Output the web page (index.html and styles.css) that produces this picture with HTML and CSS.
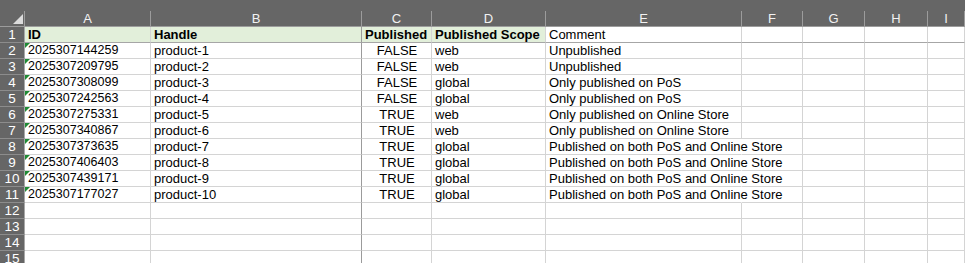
FILE: index.html
```html
<!DOCTYPE html>
<html>
<head>
  <title>products.csv</title>
  <link rel="stylesheet" href="styles.css">
</head>
<body>
  <div class="sheet">
    <div class="row colhead">
      <div class="corner"><svg width="10" height="10" viewBox="0 0 10 10"><polygon points="10,0 10,10 0,10" fill="#dcdcdc"/></svg></div>
      <div>A</div><div class="frz">B</div><div>C</div><div>D</div><div>E</div><div>F</div><div>G</div><div>H</div><div>I</div>
    </div>

    <div class="row first">
      <div class="rh">1</div>
      <div class="cell hd">ID</div>
      <div class="cell hd frz">Handle</div>
      <div class="cell hd">Published</div>
      <div class="cell hd">Published Scope</div>
      <div class="cell">Comment</div>
      <div class="cell"></div><div class="cell"></div><div class="cell"></div><div class="cell"></div>
    </div>

    <div class="row">
      <div class="rh">2</div>
      <div class="cell tx">2025307144259</div>
      <div class="cell frz">product-1</div>
      <div class="cell mid">FALSE</div>
      <div class="cell">web</div>
      <div class="cell">Unpublished</div>
      <div class="cell"></div><div class="cell"></div><div class="cell"></div><div class="cell"></div>
    </div>
    <div class="row">
      <div class="rh">3</div>
      <div class="cell tx">2025307209795</div>
      <div class="cell frz">product-2</div>
      <div class="cell mid">FALSE</div>
      <div class="cell">web</div>
      <div class="cell">Unpublished</div>
      <div class="cell"></div><div class="cell"></div><div class="cell"></div><div class="cell"></div>
    </div>
    <div class="row">
      <div class="rh">4</div>
      <div class="cell tx">2025307308099</div>
      <div class="cell frz">product-3</div>
      <div class="cell mid">FALSE</div>
      <div class="cell">global</div>
      <div class="cell">Only published on PoS</div>
      <div class="cell"></div><div class="cell"></div><div class="cell"></div><div class="cell"></div>
    </div>
    <div class="row">
      <div class="rh">5</div>
      <div class="cell tx">2025307242563</div>
      <div class="cell frz">product-4</div>
      <div class="cell mid">FALSE</div>
      <div class="cell">global</div>
      <div class="cell">Only published on PoS</div>
      <div class="cell"></div><div class="cell"></div><div class="cell"></div><div class="cell"></div>
    </div>
    <div class="row">
      <div class="rh">6</div>
      <div class="cell tx">2025307275331</div>
      <div class="cell frz">product-5</div>
      <div class="cell mid">TRUE</div>
      <div class="cell">web</div>
      <div class="cell">Only published on Online Store</div>
      <div class="cell"></div><div class="cell"></div><div class="cell"></div><div class="cell"></div>
    </div>
    <div class="row">
      <div class="rh">7</div>
      <div class="cell tx">2025307340867</div>
      <div class="cell frz">product-6</div>
      <div class="cell mid">TRUE</div>
      <div class="cell">web</div>
      <div class="cell">Only published on Online Store</div>
      <div class="cell"></div><div class="cell"></div><div class="cell"></div><div class="cell"></div>
    </div>
    <div class="row">
      <div class="rh">8</div>
      <div class="cell tx">2025307373635</div>
      <div class="cell frz">product-7</div>
      <div class="cell mid">TRUE</div>
      <div class="cell">global</div>
      <div class="cell spill">Published on both PoS and Online Store</div>
      <div class="cell"></div><div class="cell"></div><div class="cell"></div><div class="cell"></div>
    </div>
    <div class="row">
      <div class="rh">9</div>
      <div class="cell tx">2025307406403</div>
      <div class="cell frz">product-8</div>
      <div class="cell mid">TRUE</div>
      <div class="cell">global</div>
      <div class="cell spill">Published on both PoS and Online Store</div>
      <div class="cell"></div><div class="cell"></div><div class="cell"></div><div class="cell"></div>
    </div>
    <div class="row">
      <div class="rh">10</div>
      <div class="cell tx">2025307439171</div>
      <div class="cell frz">product-9</div>
      <div class="cell mid">TRUE</div>
      <div class="cell">global</div>
      <div class="cell spill">Published on both PoS and Online Store</div>
      <div class="cell"></div><div class="cell"></div><div class="cell"></div><div class="cell"></div>
    </div>
    <div class="row">
      <div class="rh">11</div>
      <div class="cell tx">2025307177027</div>
      <div class="cell frz">product-10</div>
      <div class="cell mid">TRUE</div>
      <div class="cell">global</div>
      <div class="cell spill">Published on both PoS and Online Store</div>
      <div class="cell"></div><div class="cell"></div><div class="cell"></div><div class="cell"></div>
    </div>

    <div class="row">
      <div class="rh">12</div>
      <div class="cell"></div><div class="cell frz"></div><div class="cell"></div><div class="cell"></div><div class="cell"></div>
      <div class="cell"></div><div class="cell"></div><div class="cell"></div><div class="cell"></div>
    </div>
    <div class="row">
      <div class="rh">13</div>
      <div class="cell"></div><div class="cell frz"></div><div class="cell"></div><div class="cell"></div><div class="cell"></div>
      <div class="cell"></div><div class="cell"></div><div class="cell"></div><div class="cell"></div>
    </div>
    <div class="row">
      <div class="rh">14</div>
      <div class="cell"></div><div class="cell frz"></div><div class="cell"></div><div class="cell"></div><div class="cell"></div>
      <div class="cell"></div><div class="cell"></div><div class="cell"></div><div class="cell"></div>
    </div>
    <div class="row">
      <div class="rh">15</div>
      <div class="cell"></div><div class="cell frz"></div><div class="cell"></div><div class="cell"></div><div class="cell"></div>
      <div class="cell"></div><div class="cell"></div><div class="cell"></div><div class="cell"></div>
    </div>
  </div>
</body>
</html>
```

FILE: styles.css
```css
body {
  margin: 0;
  background: #fff;
  font-family: "Liberation Sans", Arial, sans-serif;
  font-size: 13px;
  color: #000;
  overflow: hidden;
}

.sheet {
  width: 965px;
}

.row {
  display: grid;
  grid-template-columns: 25px 126px 211px 70px 114px 196px 61px 62px 63px 37px;
  height: 16px;
}

/* column letters */
.colhead {
  height: 27px;
  padding-top: 11px;
  box-sizing: border-box;
  background: #666;
}

.colhead div {
  box-sizing: border-box;
  border-right: 1px solid #9c9c9c;
  border-bottom: 1px solid #9c9c9c;
  color: #f2f2f2;
  font-size: 13px;
  line-height: 15px;
  text-align: center;
}

.colhead .corner {
  display: flex;
  justify-content: flex-end;
  align-items: flex-end;
  padding: 0 1px 2px 0;
}

/* row numbers */
.rh {
  box-sizing: border-box;
  background: #666;
  color: #fff;
  border-right: 1px solid #a8a8a8;
  border-bottom: 1px solid #8c8c8c;
  font-size: 13.5px;
  line-height: 15px;
  text-align: center;
}

.cell {
  position: relative;
  box-sizing: border-box;
  border-right: 1px solid #d4d4d4;
  border-bottom: 1px solid #d4d4d4;
  padding: 1px 2px 0 3px;
  line-height: 13px;
  white-space: nowrap;
}

.cell.tx {
  font-size: 12.5px;
}

.cell.mid {
  text-align: center;
}

.cell.spill {
  border-right-color: transparent;
}

.cell.frz {
  border-right-color: #9b9b9b;
}

.first .cell {
  border-bottom-color: #a6a6a6;
}

.cell.hd {
  background: #e2efda;
  font-weight: bold;
}

/* number stored as text marker */
.cell.tx::before {
  content: "";
  position: absolute;
  left: 0;
  top: 0;
  border-top: 5px solid #1f8a34;
  border-right: 5px solid transparent;
}
```
